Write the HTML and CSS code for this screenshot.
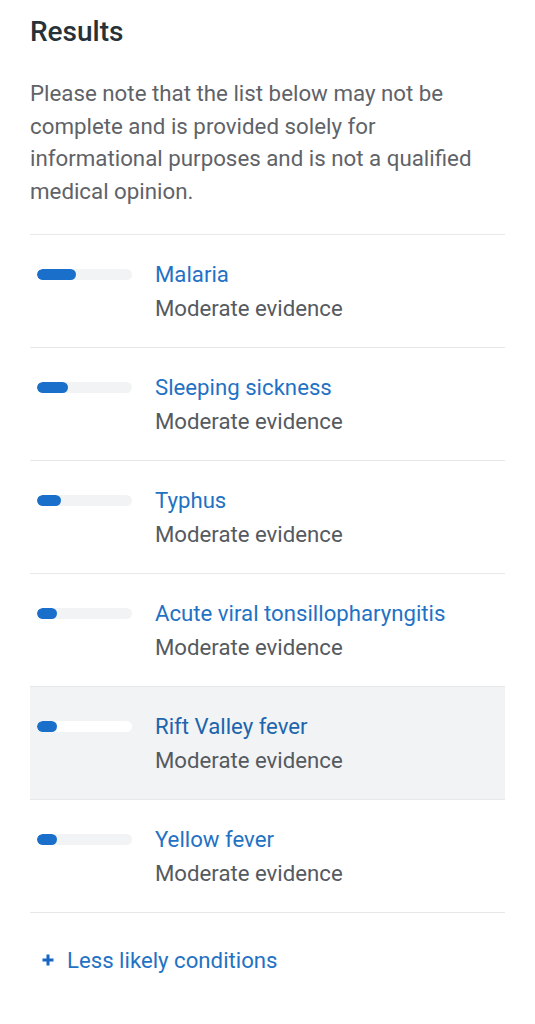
FILE: index.html
```html
<!DOCTYPE html>
<html>
<head>
<meta charset="utf-8">
<link rel="stylesheet" href="styles.css">
</head>
<body>
<div class="page">
  <h1 class="title">Results</h1>
  <p class="note">Please note that the list below may not be complete and is provided solely for informational purposes and is not a qualified medical opinion.</p>
  <ul class="list">
    <li class="row">
      <div class="bar"><div class="fill" style="width:39px"></div></div>
      <div class="info"><div class="name">Malaria</div><div class="evidence">Moderate evidence</div></div>
    </li>
    <li class="row">
      <div class="bar"><div class="fill" style="width:31px"></div></div>
      <div class="info"><div class="name">Sleeping sickness</div><div class="evidence">Moderate evidence</div></div>
    </li>
    <li class="row">
      <div class="bar"><div class="fill" style="width:24px"></div></div>
      <div class="info"><div class="name">Typhus</div><div class="evidence">Moderate evidence</div></div>
    </li>
    <li class="row">
      <div class="bar"><div class="fill" style="width:20px"></div></div>
      <div class="info"><div class="name">Acute viral tonsillopharyngitis</div><div class="evidence">Moderate evidence</div></div>
    </li>
    <li class="row active">
      <div class="bar"><div class="fill" style="width:20px"></div></div>
      <div class="info"><div class="name">Rift Valley fever</div><div class="evidence">Moderate evidence</div></div>
    </li>
    <li class="row">
      <div class="bar"><div class="fill" style="width:20px"></div></div>
      <div class="info"><div class="name">Yellow fever</div><div class="evidence">Moderate evidence</div></div>
    </li>
  </ul>
  <div class="more">
    <svg class="plus" width="12" height="12" viewBox="0 0 12 12"><path d="M6 0.5v11M0.5 6h11" stroke="#1666c2" stroke-width="3" stroke-linecap="butt"/></svg>
    <span>Less likely conditions</span>
  </div>
</div>
</body>
</html>
```

FILE: styles.css
```css
html, body {
  margin: 0;
  padding: 0;
  background: #ffffff;
}
body {
  font-family: Roboto, "Liberation Sans", sans-serif;
}
.page {
  padding: 13px 30px 0 30px;
}
.title {
  margin: 0;
  font-size: 28px;
  line-height: 38px;
  font-weight: 500;
  color: #263238;
}
.note {
  margin: 26px 0 0 0;
  font-size: 22.3px;
  line-height: 32.5px;
  color: #5f6368;
  padding-bottom: 27px;
}
.list {
  list-style: none;
  margin: 0;
  padding: 0;
  border-top: 1px solid #e6e8ea;
}
.row {
  display: flex;
  align-items: flex-start;
  padding: 22px 0 22px 0;
  border-bottom: 1px solid #e6e8ea;
  height: 68px;
}
.row.active {
  background: #f2f3f5;
}
.bar {
  width: 95px;
  height: 11px;
  border-radius: 6px;
  background: #f1f3f5;
  margin: 12px 0 0 7px;
  flex: none;
  overflow: hidden;
}
.row.active .bar {
  background: #ffffff;
}
.fill {
  height: 100%;
  border-radius: 6px;
  background: #1a6fcb;
}
.info {
  margin-left: 23px;
}
.name {
  font-size: 22.2px;
  line-height: 34px;
  color: #1f72c4;
}
.row.active .name {
  color: #1c65ad;
}
.evidence {
  font-size: 22.2px;
  line-height: 34px;
  color: #555a5f;
}
.more {
  display: flex;
  align-items: center;
  margin-top: 33px;
  padding-left: 12px;
  font-size: 22.2px;
  line-height: 28px;
  color: #1f72c4;
}
.plus {
  margin-right: 13px;
}
```
